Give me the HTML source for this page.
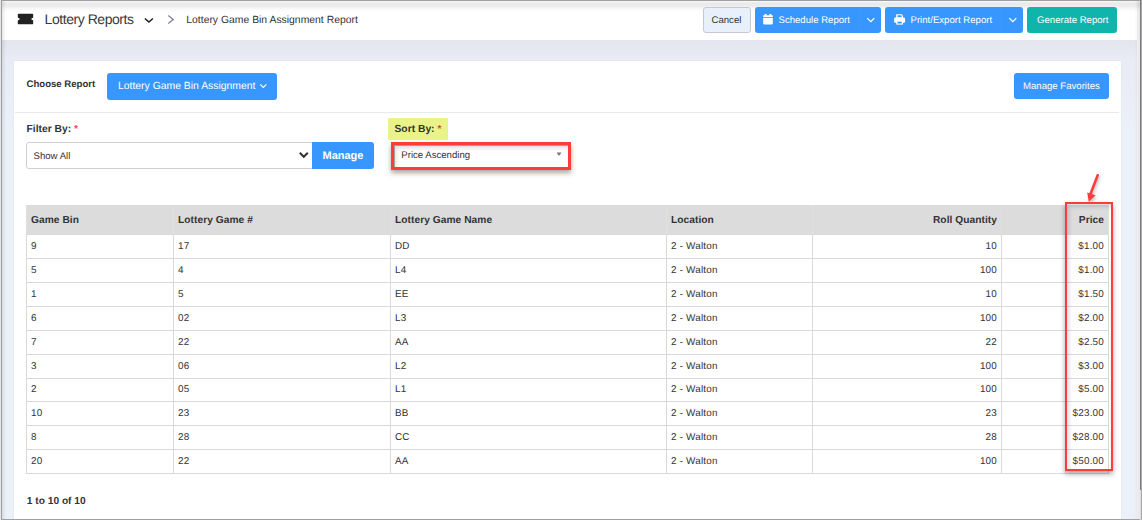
<!DOCTYPE html>
<html><head><meta charset="utf-8">
<style>
*{box-sizing:border-box}
html,body{margin:0;padding:0}
body{width:1142px;height:520px;overflow:hidden;position:relative;background:#fff;font-family:"Liberation Sans",sans-serif;color:#333;text-rendering:geometricPrecision}
.a{position:absolute}
.t{position:absolute;white-space:nowrap;line-height:1}
.btn{position:absolute;border-radius:3px;color:#fff}
#card{left:14px;top:61px;width:1107px;height:470px;background:#fff;box-shadow:0 0 1px rgba(40,50,80,.12)}
.req{color:#f64e60}
table{position:absolute;border-collapse:collapse;table-layout:fixed}
td,th{border:1px solid #d9d9d9;font-size:9.9px;letter-spacing:.2px;padding:0 4px 0 4px;white-space:nowrap;overflow:hidden}
th{background:#dcdcdc;font-weight:bold;text-align:left;height:29.3px;border-color:#dcdcdc #e0e0e0;font-size:10.2px;letter-spacing:.05px}
td{height:23.88px}
.r{text-align:right}
.redbox{position:absolute;border:2px solid #ff3c3c;box-shadow:0 3px 5px rgba(0,0,0,.35),inset 2px 3px 4px rgba(0,0,0,.14)}
</style></head>
<body>
<div class="a" style="left:1137px;top:1px;width:3px;height:518px;background:#f4f4f4"></div>
<div id="bg" class="a" style="left:2px;top:40px;width:1135px;height:479px;background:linear-gradient(#e2e4ee,#e9ebf5 20px,#ecf0f9 90px)"></div>
<div class="a" style="left:2px;top:1px;width:1138px;height:11px;background:linear-gradient(rgba(0,0,0,.04),rgba(0,0,0,.04) 1px,rgba(0,0,0,.085) 2px,rgba(0,0,0,.075) 5px,rgba(0,0,0,.025) 8px,rgba(0,0,0,0) 11px)"></div>
<div class="a" style="left:2px;top:1px;width:4px;height:518px;background:linear-gradient(90deg,rgba(0,0,0,.09),rgba(0,0,0,0))"></div>
<div class="a" style="left:1134px;top:1px;width:6px;height:518px;background:linear-gradient(90deg,rgba(0,0,0,0),rgba(0,0,0,.05))"></div>

<!-- header content (page coords) -->
<svg class="a" style="left:17px;top:13px" width="17" height="12" viewBox="0 0 17 12">
  <path d="M1.5 1.5 H15.5 V4.2 A1.8 1.8 0 0 0 15.5 7.8 V10.5 H1.5 V7.8 A1.8 1.8 0 0 0 1.5 4.2 Z" fill="#222" stroke="#222" stroke-width="1.4" stroke-linejoin="round"/>
</svg>
<div class="t" style="left:44.6px;top:12.3px;font-size:14px;letter-spacing:-.45px;color:#3a3a3a">Lottery Reports</div>
<svg class="a" style="left:143px;top:16px" width="12" height="8" viewBox="0 0 12 8"><path d="M1.9 2.5 L5.9 6 L9.9 2.5" fill="none" stroke="#1e1e1e" stroke-width="1.5"/></svg>
<svg class="a" style="left:166px;top:14px" width="10" height="12" viewBox="0 0 10 12"><path d="M2.3 1.5 L7.2 5.4 L2.3 9.4" fill="none" stroke="#7e8299" stroke-width="1.3"/></svg>
<div class="t" style="left:186.3px;top:16.3px;font-size:10.4px;color:#333">Lottery Game Bin Assignment Report</div>

<div class="btn" style="left:703px;top:7px;width:48px;height:26px;background:#e8f1fb;border:1px solid #c5c9cf"></div>
<div class="t" style="left:711.5px;top:15.5px;font-size:9.6px;color:#333">Cancel</div>

<div class="btn" style="left:755px;top:7px;width:126px;height:26px;background:#3797ff"></div>
<div class="a" style="left:859px;top:7px;width:1px;height:26px;background:#3a99fc"></div>
<svg class="a" style="left:762px;top:13px" width="12" height="12" viewBox="0 0 12 12"><path d="M1.2 2.3 H10.8 V4.2 H1.2 Z" fill="#fff"/><rect x="2.6" y="1" width="2" height="2" rx=".6" fill="#fff"/><rect x="7.4" y="1" width="2" height="2" rx=".6" fill="#fff"/><path d="M1.2 4.9 H10.8 V10.6 Q10.8 11.4 10 11.4 H2 Q1.2 11.4 1.2 10.6 Z" fill="#fff"/></svg>
<div class="t" style="left:778.5px;top:15.5px;font-size:9.6px;color:#fff">Schedule Report</div>
<svg class="a" style="left:866px;top:16px" width="10" height="7" viewBox="0 0 10 7"><path d="M1.3 2.1 L4.8 5.6 L8.3 2.1" fill="none" stroke="#fff" stroke-width="1.3"/></svg>

<div class="btn" style="left:885px;top:7px;width:138px;height:26px;background:#3797ff"></div>
<div class="a" style="left:1000px;top:7px;width:1px;height:26px;background:#3a99fc"></div>
<svg class="a" style="left:893px;top:13px" width="13" height="13" viewBox="0 0 13 13"><path d="M3.2 1.2 H8.8 L10 2.4 V5 H3.2 Z" fill="#fff"/><rect x="4.5" y="2.3" width="4.2" height="2" fill="#3797ff"/><rect x="1.1" y="4.6" width="11" height="5.2" rx="1.3" fill="#fff"/><rect x="3.2" y="8" width="6.8" height="3.6" fill="#fff"/><rect x="4.4" y="8.7" width="4.4" height="1.8" fill="#3797ff"/></svg>
<div class="t" style="left:910.5px;top:15.5px;font-size:9.6px;color:#fff">Print/Export Report</div>
<svg class="a" style="left:1008px;top:16px" width="10" height="7" viewBox="0 0 10 7"><path d="M1.3 2.1 L4.8 5.6 L8.3 2.1" fill="none" stroke="#fff" stroke-width="1.3"/></svg>

<div class="btn" style="left:1027px;top:7px;width:90px;height:26px;background:#0fb5ab"></div>
<div class="t" style="left:1037px;top:15.5px;font-size:9.6px;color:#fff">Generate Report</div>

<!-- card -->
<div id="card" class="a"></div>
<div class="t" style="left:26.5px;top:80px;font-size:9.6px;font-weight:bold;color:#333">Choose Report</div>
<div class="btn" style="left:107px;top:73px;width:170px;height:27px;background:#3797ff"></div>
<div class="t" style="left:118px;top:81.5px;font-size:10.4px;color:#fff">Lottery Game Bin Assignment</div>
<svg class="a" style="left:259px;top:82px" width="9" height="7" viewBox="0 0 9 7"><path d="M1.2 2.4 L4.3 5.4 L7.4 2.4" fill="none" stroke="#fff" stroke-width="1.1"/></svg>
<div class="btn" style="left:1014px;top:73px;width:95px;height:26px;background:#3797ff"></div>
<div class="t" style="left:1023px;top:82px;font-size:9.6px;color:#fff">Manage Favorites</div>
<div class="a" style="left:15px;top:112px;width:1104px;height:1px;background:#e8ebeb"></div>

<div class="t" style="left:26.5px;top:124.5px;font-size:10.3px;font-weight:bold;color:#333">Filter By: <span class="req">*</span></div>
<div class="a" style="left:26px;top:142px;width:287px;height:27px;border:1px solid #cfcfcf;border-radius:3px 0 0 3px;background:#fff"></div>
<div class="t" style="left:33.5px;top:151.5px;font-size:9.6px;color:#333">Show All</div>
<svg class="a" style="left:298px;top:151px" width="12" height="9" viewBox="0 0 12 9"><path d="M1.8 1.8 L5.8 5.8 L9.8 1.8" fill="none" stroke="#333" stroke-width="2"/></svg>
<div class="btn" style="left:312px;top:142px;width:62px;height:27px;background:#3797ff;border-radius:0 3px 3px 0"></div>
<div class="t" style="left:322.5px;top:150.5px;font-size:11px;font-weight:bold;color:#fff">Manage</div>

<div class="a" style="left:388px;top:118px;width:60px;height:22px;background:#eaf38a"></div>
<div class="t" style="left:394.5px;top:124.5px;font-size:10.3px;font-weight:bold;color:#333">Sort By: <span class="req" style="color:#e8453c">*</span></div>

<div class="a" style="left:393.5px;top:144.5px;width:175px;height:23px;border:1px solid #b5b5b5;background:#fff"></div>
<div class="redbox" style="left:391px;top:142px;width:180px;height:28px;border-width:3px"></div>
<div class="t" style="left:401.3px;top:151px;font-size:9.6px;color:#333">Price Ascending</div>
<svg class="a" style="left:555px;top:150.5px" width="8" height="6" viewBox="0 0 8 6"><path d="M1.5 1.5 H6.5 L4 4.9 Z" fill="#777"/></svg>

<table style="left:26px;top:205px;width:1082px">
<colgroup><col style="width:147px"><col style="width:217px"><col style="width:276px"><col style="width:146px"><col style="width:189px"><col style="width:64px"><col style="width:43px"></colgroup>
<tr><th>Game Bin</th><th>Lottery Game #</th><th>Lottery Game Name</th><th>Location</th><th class="r">Roll Quantity</th><th></th><th class="r">Price</th></tr>
<tr><td>9</td><td>17</td><td>DD</td><td>2 - Walton</td><td class="r">10</td><td></td><td class="r">$1.00</td></tr>
<tr><td>5</td><td>4</td><td>L4</td><td>2 - Walton</td><td class="r">100</td><td></td><td class="r">$1.00</td></tr>
<tr><td>1</td><td>5</td><td>EE</td><td>2 - Walton</td><td class="r">10</td><td></td><td class="r">$1.50</td></tr>
<tr><td>6</td><td>02</td><td>L3</td><td>2 - Walton</td><td class="r">100</td><td></td><td class="r">$2.00</td></tr>
<tr><td>7</td><td>22</td><td>AA</td><td>2 - Walton</td><td class="r">22</td><td></td><td class="r">$2.50</td></tr>
<tr><td>3</td><td>06</td><td>L2</td><td>2 - Walton</td><td class="r">100</td><td></td><td class="r">$3.00</td></tr>
<tr><td>2</td><td>05</td><td>L1</td><td>2 - Walton</td><td class="r">100</td><td></td><td class="r">$5.00</td></tr>
<tr><td>10</td><td>23</td><td>BB</td><td>2 - Walton</td><td class="r">23</td><td></td><td class="r">$23.00</td></tr>
<tr><td>8</td><td>28</td><td>CC</td><td>2 - Walton</td><td class="r">28</td><td></td><td class="r">$28.00</td></tr>
<tr><td>20</td><td>22</td><td>AA</td><td>2 - Walton</td><td class="r">100</td><td></td><td class="r">$50.00</td></tr>
</table>

<div class="t" style="left:26.8px;top:497px;font-size:10.2px;font-weight:bold;color:#333">1 to 10 of 10</div>

<svg class="a" style="left:1080px;top:170px;filter:drop-shadow(1px 2px 1.5px rgba(0,0,0,.25))" width="25" height="36" viewBox="0 0 25 36">
  <path d="M17.7 5.3 L10.5 24" stroke="#ff3c3c" stroke-width="2.6" stroke-linecap="round"/>
  <path d="M7.2 22.6 L15.6 25.3 L8.8 31.8 Z" fill="#ff3c3c"/>
</svg>
<div class="redbox" style="left:1065px;top:202px;width:48px;height:269.3px"></div>
<div class="a" style="left:0;top:0;width:1px;height:520px;background:#e2e4ea"></div>
<div class="a" style="left:1px;top:0;width:1px;height:520px;background:#a0a0a0"></div>
<div class="a" style="left:1px;top:0;width:1141px;height:1px;background:#a0a0a0"></div>
<div class="a" style="left:1px;top:519px;width:1141px;height:1px;background:#a0a0a0"></div>
<div class="a" style="left:1140px;top:0;width:1px;height:490px;background:#7c7c7c"></div>
<div class="a" style="left:1140px;top:490px;width:1px;height:30px;background:#dedede"></div>
<div class="a" style="left:1141px;top:0;width:1px;height:520px;background:#a8a8a8"></div>
</body></html>
